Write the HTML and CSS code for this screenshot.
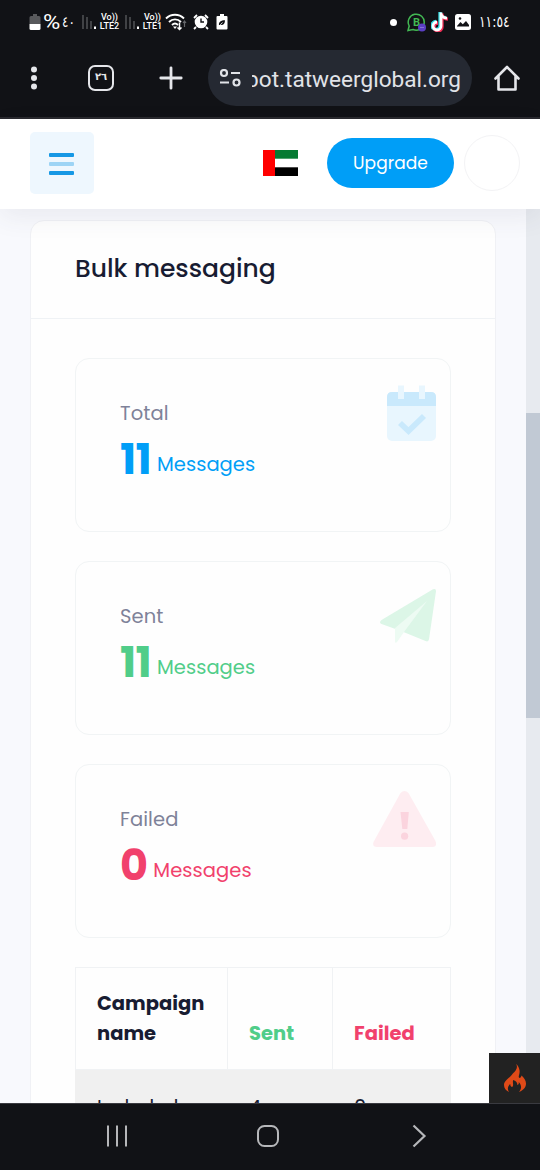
FILE: index.html
```html
<!DOCTYPE html>
<html lang="en">
<head>
<meta charset="utf-8">
<title>Bulk messaging</title>
<link rel="stylesheet" href="styles.css">
</head>
<body>
<div class="phone">
  <div class="status">
    <div class="status-left">
      <svg width="12" height="17" viewBox="0 0 12 17"><path d="M4 0h4v2h2a1.500 1.500 0 0 1 1.500 1.500V10H.5V3.500A1.500 1.500 0 0 1 2 2h2z" fill="#58595c"/><path d="M.5 10h11v4.500a1.500 1.500 0 0 1-1.500 1.500H2a1.500 1.500 0 0 1-1.500-1.500z" fill="#fff"/></svg>
      <span class="percent">%</span><span class="battery-num">٤٠</span>
      <svg class="signal" width="15" height="16" viewBox="0 0 15 16"><path d="M1 1v14M5 3v12M9 7v8" stroke="#55575b" stroke-width="1.400"/><path d="M13 12.500v2.500" stroke="#fff" stroke-width="2"/></svg>
      <span class="lte"><b>Vo))</b><b>LTE2</b></span>
      <svg class="signal two" width="15" height="16" viewBox="0 0 15 16"><path d="M1 1v14M5 3v12M9 7v8" stroke="#55575b" stroke-width="1.400"/><path d="M13 12.500v2.500" stroke="#fff" stroke-width="2"/></svg>
      <span class="lte"><b>Vo))</b><b>LTE1</b></span>
      <svg class="wifi" width="22" height="18" viewBox="0 0 22 18" fill="none" stroke="#fff" stroke-width="1.900"><path d="M1 5.500c5-5 13-5 18 0M4 9c3.500-3.500 8.500-3.500 12 0M7 12c2-2 4-2 6 0"/><path d="M8 13.500h4l-2 2.500z" fill="#fff" stroke="none"/><path d="M14.500 9.500v7m-2-2 2 2 2-2" stroke-width="1.500"/><path d="M19.500 14V8m-1.500 2 1.500-2 1.500 2" stroke="#66686c" stroke-width="1.200"/></svg>
      <svg class="alarm" width="16" height="16" viewBox="0 0 16 16"><path d="m1 4 3-3m8 0 3 3M3 13l-2 2m12-2 2 2" stroke="#fff" stroke-width="1.800"/><circle cx="8" cy="8" r="6.300" fill="#fff"/><path d="M8 4.500V8h3" fill="none" stroke="#111216" stroke-width="1.400"/></svg>
      <svg class="saver" width="12" height="16" viewBox="0 0 12 16"><path d="M4 0h4v2h2.500A1 1 0 0 1 11.500 3v11.500a1 1 0 0 1-1 1h-9a1 1 0 0 1-1-1V3a1 1 0 0 1 1-1H4z" fill="#fff"/><path d="M3 11C2.500 8 5 6.300 9 6.300 9 9.500 7.500 11.500 4.500 11z" fill="#111216"/><path d="m2.800 12.500 3.700-4" stroke="#fff" stroke-width=".8"/></svg>
    </div>
    <div class="status-right">
      <i class="dot"></i>
      <svg width="20" height="19" viewBox="0 0 20 19"><path d="M1 17.500 2.200 13A8 8 0 1 1 6 16.500z" fill="none" stroke="#42b853" stroke-width="1.500"/><text x="6" y="13" class="wa-b">B</text><circle cx="15" cy="14.500" r="4" fill="#5b3fc4"/><path d="M13 14.500h4" stroke="#8572d5"/></svg>
      <svg class="tiktok" width="18" height="20" viewBox="0 0 18 20" fill="none" stroke-width="3.300"><path d="M9 0v13.500a4 4 0 1 1-4-4M9 1c.5 3 3 4.500 6 4.700" stroke="#35dce3"/><path d="M11 1.500V15a4 4 0 1 1-4-4M11 2.500c.5 3 3 4.500 6 4.700" stroke="#f32d55"/><path d="M10 .5V14a4 4 0 1 1-4-4M10 1.500c.5 3 3 4.500 6 4.700" stroke="#fff" stroke-width="2.800"/></svg>
      <svg class="photo" width="16" height="16" viewBox="0 0 16 16"><rect width="16" height="16" rx="2.500" fill="#fff"/><path d="m2 12 3.500-4 2.300 2.300L11 7l3 4v1.500H2z" fill="#111216"/><circle cx="5" cy="4.500" r="1.300" fill="#111216"/></svg>
      <span class="time">١١:٥٤</span>
    </div>
  </div>
  <div class="browser">
    <svg class="kebab" width="6" height="24" viewBox="0 0 6 24" fill="#e5e6ea"><circle cx="3" cy="3.500" r="3"/><circle cx="3" cy="12" r="3"/><circle cx="3" cy="20.500" r="3"/></svg>
    <span class="tabs">٢٦</span>
    <svg class="plus" width="24" height="24" viewBox="0 0 24 24"><path d="M12 1.800v20.400M1.800 12h20.400" stroke="#e5e6ea" stroke-width="2.800" stroke-linecap="round"/></svg>
    <div class="url">
      <svg width="22" height="18" viewBox="0 0 22 18" fill="none" stroke="#e1e3e8" stroke-width="2.200"><circle cx="5" cy="4" r="3"/><path d="M12 4h9M1 13.500h9"/><circle cx="17.500" cy="13.500" r="3"/></svg>
      <span class="address">bot.tatweerglobal.org</span>
    </div>
    <svg class="home" width="26" height="26" viewBox="0 0 26 26"><path d="M1.500 13.500 13 2l11.500 11.500M4.500 11v13.500h17V11" fill="none" stroke="#e5e6ea" stroke-width="2.600" stroke-linecap="round" stroke-linejoin="round"/></svg>
  </div>

  <header class="topbar">
    <button class="menu" aria-label="Menu"><i></i><i></i><i></i></button>
    <svg class="flag" width="35" height="26" viewBox="0 0 35 26"><path fill="#fff" d="M0 0h35v26H0z"/><path fill="#067a32" d="M12 0h23v8.700H12z"/><path d="M12 17.300h23V26H12z"/><path fill="#f00" d="M0 0h12v26H0z"/></svg>
    <button class="upgrade">Upgrade</button>
    <span class="avatar"></span>
  </header>

  <div class="viewport">
    <main class="page">
      <section class="panel">
        <h1 class="panel-head"><span>Bulk messaging</span></h1>
        <div class="panel-body">
          <article class="stat blue">
            <h2>Total</h2>
            <p><strong>11</strong><span>Messages</span></p>
            <svg class="stat-icon" width="64" height="64" viewBox="0 0 64 64"><rect x="14" y="8" width="49" height="49" rx="5" fill="#e8f6fe"/><path d="M14 22V13q0-5 5-5h39q5 0 5 5v9z" fill="#c9e9fc"/><path d="M25 1.500h6V15h-6zM46 1.500h6V15h-6z" fill="#e8f6fe"/><path d="m27 39 8.500 8L51 32" fill="none" stroke="#c9e9fc" stroke-width="5.800"/></svg>
          </article>
          <article class="stat green">
            <h2>Sent</h2>
            <p><strong>11</strong><span>Messages</span></p>
            <svg class="stat-icon low" width="64" height="64" viewBox="0 0 64 64"><path d="M60 1.300q3-1.300 3 2l-7 48q-.5 3-3.500 1.700L28 43 8.500 36q-3-1.500 0-4z" fill="#dcf6e7"/><path d="M22 40 54 13 31 44l-7 10q-2 2-2-1z" fill="#edfbf3"/></svg>
          </article>
          <article class="stat red">
            <h2>Failed</h2>
            <p><strong>0</strong><span>Messages</span></p>
            <svg class="stat-icon low" width="64" height="64" viewBox="0 0 64 64"><path d="M27.500 2q4-4 8 0L62.500 50q2 6-3 6H4q-5 0-3.500-5z" fill="#feedf1"/><path d="M27.500 21h8.300l-1.500 17h-5z" fill="#fbd4de"/><circle cx="31.600" cy="45.200" r="3.600" fill="#fbd4de"/></svg>
          </article>
          <table class="campaigns">
            <thead><tr><th>Campaign<br>name</th><th class="sent">Sent</th><th class="failed">Failed</th></tr></thead>
            <tbody><tr><td>Included</td><td>4</td><td>0</td></tr></tbody>
          </table>
        </div>
      </section>
    </main>
    <div class="scrollbar"><i></i></div>
    <div class="debug">
      <svg width="24" height="30" viewBox="0 0 24 30"><path d="M13.200 1c2.500 5-2 8-4.500 11C5 16 1 18 1 22c0 3.300 2 5.500 5 7-2-3-1.200-6 1.200-8 0 2 1 3 2 3 2-2 0-4 1-7 3 1 4.500 3 4 5 1.500-.3 1.800-1.500 1.500-3 3 3 3.200 6.500.3 10 5-2 7-5 7-8.500 0-3.500-2-5.500-4.500-8-.4 2-1.500 2.800-2.300 2.300-1.500-1 1-3.500.3-7.500C16 4.500 15 2.500 13.200 1z" fill="#df4a18"/></svg>
    </div>
  </div>

  <nav class="system">
    <svg width="24" height="24" viewBox="0 0 24 24"><path d="M3 1.500v21M12 1.500v21M21 1.500v21" stroke="#b6b7ba" stroke-width="2"/></svg>
    <svg width="24" height="24" viewBox="0 0 24 24"><rect x="2" y="2" width="20" height="20" rx="6.500" fill="none" stroke="#b6b7ba" stroke-width="2"/></svg>
    <svg width="24" height="24" viewBox="0 0 24 24"><path d="m6.500 1.500 11 10.500-11 10.500" fill="none" stroke="#b6b7ba" stroke-width="2.200"/></svg>
  </nav>
</div>
</body>
</html>
```

FILE: styles.css
```css
* { box-sizing: border-box; }
body { margin: 0; background: #111216; }
svg { display: block; flex: none; }
.phone { width: 540px; height: 1170px; display: flex; flex-direction: column; overflow: hidden; font-family: Poppins, Inter, sans-serif; }

.status { height: 44px; flex: none; display: flex; justify-content: space-between; padding: 0 29px; background: #111216; color: #fff; }
.status-left, .status-right { display: flex; align-items: center; }
.percent { font: 20px/20px Roboto, sans-serif; margin-left: 2px; width: 18px; transform: scaleX(1.18); transform-origin: left; }
.battery-num { font: 15px/20px "DejaVu Sans", sans-serif; width: 15px; margin-left: 1px; transform: scaleX(.8); transform-origin: left; }
.signal { margin-left: 5px; }
.signal.two { margin-left: 4px; }
.lte { display: flex; flex-direction: column; align-items: center; width: 21px; margin-left: 2px; margin-right: 1px; font: 9px/9px Roboto, sans-serif; }
.lte b { font-weight: 500; }
.wifi { margin-left: 1px; }
.alarm { margin-left: 6px; }
.saver { margin-left: 7px; }
.dot { width: 7px; height: 7px; border-radius: 50%; background: #fff; margin-right: 10px; }
.wa-b { font: bold 11px Roboto, sans-serif; fill: #42b853; }
.tiktok { margin-left: 4px; }
.photo { margin-left: 6px; }
.time { font: 16px/20px "DejaVu Sans", sans-serif; direction: ltr; margin-left: 8px; width: 32px; white-space: nowrap; transform: scaleX(.77); transform-origin: left; }

.browser { height: 75px; flex: none; display: flex; align-items: center; background: #111216; border-bottom: 2px solid #29292e; padding: 0 20px 6px 31px; }
.tabs { flex: none; width: 26px; height: 26px; margin-left: 51px; border: 2.500px solid #e5e6ea; border-radius: 7px; color: #e5e6ea; font: bold 10px/20px "DejaVu Sans", sans-serif; text-align: center; }
.plus { margin-left: 45px; }
.url { flex: none; width: 264px; height: 56px; margin: 1px 0 0 25px; padding: 0 11px; border-radius: 28px; background: #252932; display: flex; align-items: center; justify-content: space-between; }
.address { width: 209px; display: flex; justify-content: flex-end; overflow: hidden; color: #e1e3e8; font: 22.600px/30px Roboto, sans-serif; padding-top: 3px; }
.home { margin: 0 0 0 22px; }

.topbar { height: 90px; flex: none; position: relative; z-index: 1; display: flex; align-items: center; background: #fff; box-shadow: 0 8px 24px rgba(60, 66, 87, .08); padding: 0 20px 2px 30px; }
.menu { width: 64px; height: 62px; border: 0; border-radius: 5px; background: #eef7fe; display: flex; flex-direction: column; align-items: center; justify-content: center; gap: 5px; padding: 2px 2px 0 0; }
.menu i { width: 25px; height: 4px; border-radius: 1px; background: #1698e5; }
.menu i:nth-child(2) { background: #9dd4f5; }
.flag { margin-left: 169px; }
.upgrade { width: 127px; height: 50px; margin-left: 29px; padding: 0; border: 0; border-radius: 25px; background: #009ef7; color: #fff; font: 17px/50px Poppins, Inter, sans-serif; letter-spacing: .1px; }
.avatar { width: 56px; height: 56px; margin-left: 10px; border: 1px solid #f3f3f5; border-radius: 50%; }

.viewport { height: 894px; flex: none; position: relative; display: flex; overflow: hidden; background: #f8f9fd; }
.page { width: 526px; padding: 11px 30px 0; }
.panel { width: 466px; height: 920px; border: 1px solid #f0f1f5; border-radius: 14px; background: #fefefe; }
.panel-head { height: 98px; margin: 0; border-bottom: 1px solid #eff2f5; padding: 28px 0 0 44px; color: #181c32; font-size: 25px; line-height: 40px; font-weight: 500; }
.panel-body { padding: 39px 44px 0; }
.stat { position: relative; height: 174px; margin-bottom: 29.100px; padding: 40px 44px 0; border: 1px solid #f1f4f5; border-radius: 14px; background: #fefefe; }
.stat h2 { margin: 0; color: #7e8299; font-size: 19.500px; line-height: 30px; font-weight: 400; letter-spacing: .1px; }
.stat p { display: flex; align-items: baseline; gap: 6px; margin: 3px 0 0; line-height: 54px; }
.stat strong { font-size: 43px; font-weight: 700; letter-spacing: -.700px; }
.stat p span { font-size: 19.500px; letter-spacing: .05px; transform: translateY(-3px); }
.stat-icon { position: absolute; right: 13px; top: 25px; }
.stat-icon.low { top: 26px; }
.blue { color: #009ef7; }
.green { color: #50cd89; }
.red { color: #f1416c; }
.campaigns { width: 376px; table-layout: fixed; border-collapse: collapse; color: #181c32; font-size: 19.500px; line-height: 29.500px; }
.campaigns th, .campaigns td { border: 1px solid #f0f2f4; padding: 21px; text-align: left; vertical-align: bottom; }
.campaigns th { height: 102px; font-weight: 700; white-space: nowrap; }
.campaigns th:nth-child(1) { width: 152px; }
.campaigns th:nth-child(2) { width: 105px; }
.campaigns .sent { color: #50cd89; }
.campaigns .failed { color: #f1416c; }
.campaigns td { padding-top: 23px; background: #f0f0f0; border-color: #f0f0f0; letter-spacing: -.500px; }
.scrollbar { width: 14px; padding-top: 204px; background: #e7eaef; }
.scrollbar i { display: block; height: 305px; background: #c1c9d4; }
.debug { position: absolute; right: 0; bottom: 0; width: 51px; height: 50px; background: #222; display: grid; place-items: center; }

.system { height: 67px; flex: none; display: flex; gap: 127px; padding: 20px 0 0 105px; background: #111216; border-top: 1px solid #3a3a40; }
```
